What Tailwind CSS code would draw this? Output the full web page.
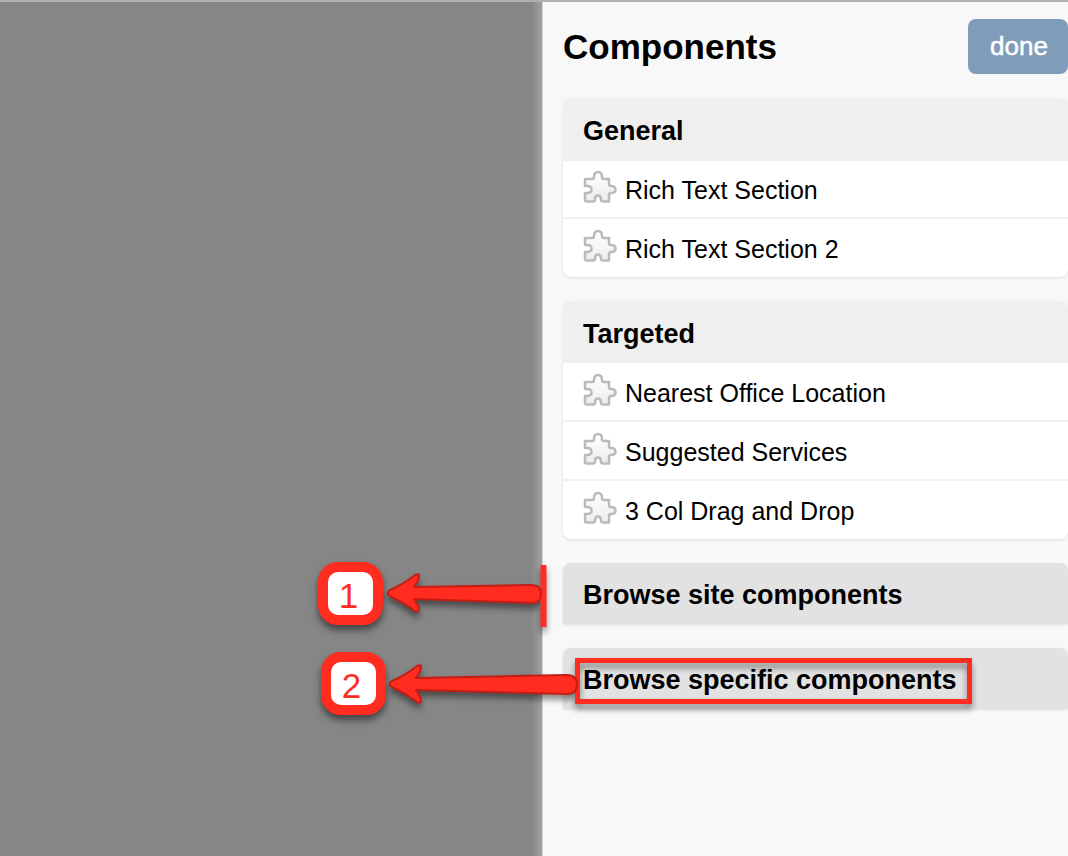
<!DOCTYPE html>
<html lang="en">
<head>
<meta charset="utf-8">
<title>Components</title>
<script src="https://cdn.jsdelivr.net/npm/@tailwindcss/browser@4"></script>
</head>
<body class="relative flex min-h-screen overflow-x-hidden border-t-2 border-[#b0b0b0] bg-[#f8f8f8] font-['Liberation_Sans',Arial,sans-serif] text-black">
<svg class="absolute size-0" aria-hidden="true">
  <defs>
    <linearGradient id="fill" x1="0" y1="0" x2="0" y2="1"><stop offset="0" stop-color="#fff"/><stop offset="1" stop-color="#ececec"/></linearGradient>
    <symbol id="puzzle" viewBox="0 0 34 34">
      <path d="M2 9H9Q11 9 11 7Q11 2 15 2Q19 2 19 7Q19 9 21 9H26V14Q26 16 28 16Q32.500 16 32.500 19.500Q32.500 23 28 23Q26 23 26 25V31.500H20Q18 31.500 18 29.500Q18 25.500 15 25.500Q12 25.500 12 29.500Q12 31.500 10 31.500H3.500Q2 31.500 2 30V23H4Q8.500 23 8.500 19.500Q8.500 16 4 16H2Z" fill="url(#fill)" stroke="#bbb" stroke-width="2.500" stroke-linejoin="round"/>
    </symbol>
  </defs>
</svg>

<div class="w-[542px] shrink-0 bg-[#868686] bg-linear-to-r from-[#868686] from-98% to-[#a0a0a0]"></div>

<aside class="min-w-0 flex-1 border-l border-[#d4d4d4] bg-[#f8f8f8] pl-5">
  <header class="flex h-24 items-start justify-between pt-[17px]">
    <h1 class="pt-2 text-[35px] leading-[40px] font-bold">Components</h1>
    <button class="h-[55px] w-[100px] rounded-lg bg-[#7f9dbb] pl-0.5 text-[26px] text-white [-webkit-text-stroke:0.5px_white]">done</button>
  </header>

  <div class="flex flex-col gap-6">
    <section class="overflow-hidden rounded-lg bg-white shadow-[0_1px_3px_#0000001a]">
      <h2 class="flex h-[63px] items-center bg-[#efefef] px-5 pt-1 text-[27px] font-bold">General</h2>
      <ul class="divide-y-2 divide-[#f0f0f0] text-[25px]">
        <li class="flex h-[58px] items-center gap-2 px-5 pt-1"><svg class="mb-2 size-[34px]"><use href="#puzzle"/></svg>Rich Text Section</li>
        <li class="flex h-[58px] items-center gap-2 px-5 pt-1"><svg class="mb-2 size-[34px]"><use href="#puzzle"/></svg>Rich Text Section 2</li>
      </ul>
    </section>

    <section class="overflow-hidden rounded-lg bg-white shadow-[0_1px_3px_#0000001a]">
      <h2 class="flex h-[62px] items-center bg-[#efefef] px-5 pt-1 text-[27px] font-bold">Targeted</h2>
      <ul class="divide-y-2 divide-[#f0f0f0] text-[25px]">
        <li class="flex h-[59px] items-center gap-2 px-5 pt-1"><svg class="mb-2 size-[34px]"><use href="#puzzle"/></svg>Nearest Office Location</li>
        <li class="flex h-[59px] items-center gap-2 px-5 pt-1"><svg class="mb-2 size-[34px]"><use href="#puzzle"/></svg>Suggested Services</li>
        <li class="flex h-[58px] items-center gap-2 px-5 pt-1"><svg class="mb-2 size-[34px]"><use href="#puzzle"/></svg>3 Col Drag and Drop</li>
      </ul>
    </section>

    <h2 class="flex h-[61px] items-center rounded-t-lg bg-[#e2e2e2] px-5 pt-1 text-[27px] font-bold shadow-[0_1px_3px_#0000001a]">Browse site components</h2>
    <h2 class="flex h-[61px] items-center rounded-t-lg bg-[#e2e2e2] px-5 pt-1 text-[27px] font-bold shadow-[0_1px_3px_#0000001a]">Browse specific components</h2>
  </div>
</aside>

<!-- Callouts drawn over the page -->
<div class="absolute top-[560px] left-[318px] flex h-[63px] w-[65px] items-center justify-center rounded-[20px] border-[10px] border-[#ff2c1f] bg-white pt-1 pr-1 text-[35px] leading-none text-[#ff2c1f] shadow-[0_5px_7px_#00000080]">1</div>
<div class="absolute top-[650px] left-[321px] flex h-[63px] w-[65px] items-center justify-center rounded-[20px] border-[10px] border-[#ff2c1f] bg-white pt-1 pr-1 text-[35px] leading-none text-[#ff2c1f] shadow-[0_5px_7px_#00000080]">2</div>
<svg class="pointer-events-none absolute top-[548px] left-[380px] h-[180px] w-[610px] drop-shadow-[0_5px_3px_#00000070]" viewBox="380 550 610 180" fill="none">
  <path d="M543.500 565V627" stroke="#ff2c1f" stroke-width="6"/>
  <g fill="#ff2c1f" stroke="#c41d15" stroke-width="2" stroke-linejoin="round">
    <path d="M388 593Q387 592 390 590Q404 584 415 575Q420 573 419 577Q418 582 414 587L532 585Q541 585 541 594Q541 603 532 603L414 599Q418 605 419 609Q419 613 415 611Q403 602 390 596Q387 594 388 593Z"/>
  </g>
  <path d="M577.500 660.500H969.500V701.500H577.500Z" stroke="#ff2c1f" stroke-width="5"/>
  <g fill="#ff2c1f" stroke="#c41d15" stroke-width="2" stroke-linejoin="round">
    <path d="M390 684Q389 683 392 681Q406 675 417 666Q422 664 421 668Q420 673 416 678L567 675Q577 675 577 684.500Q577 694 567 694L416 690Q420 696 421 700Q421 704 417 702Q405 693 392 687Q389 685 390 684Z"/>
  </g>
</svg>
</body>
</html>
